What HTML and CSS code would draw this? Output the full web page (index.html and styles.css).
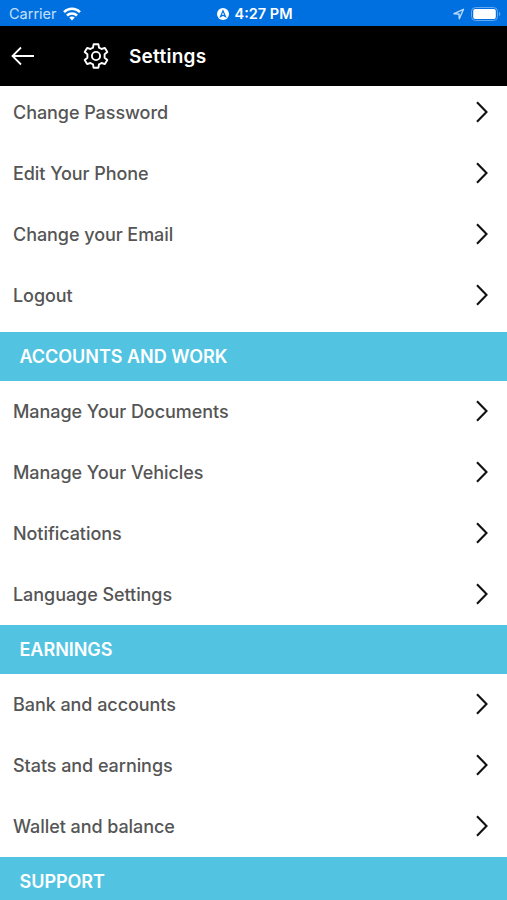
FILE: index.html
```html
<!DOCTYPE html>
<html lang="en">
<head>
  <meta charset="UTF-8" />
  <meta name="viewport" content="width=device-width, initial-scale=1.0"/>
  <title>Settings</title>
  <link rel="stylesheet" href="styles.css">
</head>
<body>

  <div class="status-bar">
    <div class="status-left">
      <span class="carrier">Carrier</span>
      <svg class="wifi" width="18" height="14" viewBox="0 0 18 14" fill="none" stroke="#fff" stroke-width="2.5">
        <path d="M1 5.2C5.5 0.7 12.5 0.7 17 5.2"/>
        <path d="M4 8.5C6.8 5.7 11.2 5.7 14 8.5"/>
        <path d="M9 13.4L6.2 10.5C7.8 9 10.2 9 11.8 10.5Z" fill="#fff" stroke="none"/>
      </svg>
    </div>
    <div class="status-center">
      <svg width="12" height="12" viewBox="0 0 12 12">
        <circle cx="6" cy="6" r="6" fill="#fff"/>
        <path d="M6 2.8L8.5 8.6L6 7.3L3.5 8.6Z" fill="none" stroke="#0070e0" stroke-width="1.2"/>
      </svg>
      <span class="time">4:27 PM</span>
    </div>
    <div class="status-right">
      <svg width="12" height="12" viewBox="0 0 12 12" fill="none" stroke="#b9dafc" stroke-width="1.4" stroke-linejoin="round">
        <path d="M1 5.7L10.5 1.3L6.3 10.8L6 6Z"/>
      </svg>
      <svg width="30" height="14" viewBox="0 0 30 14">
        <rect x="0.5" y="0.5" width="26" height="13" rx="4" fill="none" stroke="#65a9f2"/>
        <rect x="2.2" y="2" width="22.6" height="10" rx="2" fill="#fff"/>
        <path d="M28 4.8C29.8 5.5 29.8 8.5 28 9.2Z" fill="#65a9f2"/>
      </svg>
    </div>
  </div>

  <header class="header">
    <svg class="back" width="24" height="20" viewBox="0 0 24 20" fill="none" stroke="#fff" stroke-width="1.8">
      <path d="M10 1.5L1.5 10L10 18.5M1.5 10H23"/>
    </svg>
    <svg class="gear" width="26" height="26" viewBox="0 0 26 26" fill="none" stroke="#fff" stroke-width="1.9" stroke-linejoin="round">
      <path d="M10.6 1.2H15.4L16 4.6L18.6 6L21.9 4.9L24.3 9L21.6 11.3V14.7L24.3 17L21.9 21.1L18.6 20L16 21.4L15.4 24.8H10.6L10 21.4L7.4 20L4.1 21.1L1.7 17L4.4 14.7V11.3L1.7 9L4.1 4.9L7.4 6L10 4.6Z"/>
      <circle cx="13" cy="13" r="4.1"/>
    </svg>
    <h1 class="title">Settings</h1>
  </header>

  <ul class="list list-account">
    <li class="row">Change Password <svg class="chevron" viewBox="0 0 14 22"><path d="M2 1.2L11.5 11L2 20.8"/></svg></li>
    <li class="row">Edit Your Phone <svg class="chevron" viewBox="0 0 14 22"><path d="M2 1.2L11.5 11L2 20.8"/></svg></li>
    <li class="row">Change your Email <svg class="chevron" viewBox="0 0 14 22"><path d="M2 1.2L11.5 11L2 20.8"/></svg></li>
    <li class="row">Logout <svg class="chevron" viewBox="0 0 14 22"><path d="M2 1.2L11.5 11L2 20.8"/></svg></li>
  </ul>

  <h2 class="section">ACCOUNTS AND WORK</h2>
  <ul class="list">
    <li class="row">Manage Your Documents <svg class="chevron" viewBox="0 0 14 22"><path d="M2 1.2L11.5 11L2 20.8"/></svg></li>
    <li class="row">Manage Your Vehicles <svg class="chevron" viewBox="0 0 14 22"><path d="M2 1.2L11.5 11L2 20.8"/></svg></li>
    <li class="row">Notifications <svg class="chevron" viewBox="0 0 14 22"><path d="M2 1.2L11.5 11L2 20.8"/></svg></li>
    <li class="row">Language Settings <svg class="chevron" viewBox="0 0 14 22"><path d="M2 1.2L11.5 11L2 20.8"/></svg></li>
  </ul>

  <h2 class="section">EARNINGS</h2>
  <ul class="list">
    <li class="row">Bank and accounts <svg class="chevron" viewBox="0 0 14 22"><path d="M2 1.2L11.5 11L2 20.8"/></svg></li>
    <li class="row">Stats and earnings <svg class="chevron" viewBox="0 0 14 22"><path d="M2 1.2L11.5 11L2 20.8"/></svg></li>
    <li class="row">Wallet and balance <svg class="chevron" viewBox="0 0 14 22"><path d="M2 1.2L11.5 11L2 20.8"/></svg></li>
  </ul>

  <h2 class="section">SUPPORT</h2>

</body>
</html>
```
FILE: styles.css
```css
* {
  box-sizing: border-box;
}

body {
  margin: 0;
  height: 900px;
  overflow: hidden;
  background-color: #fff;
  font-family: Inter, "Liberation Sans", sans-serif;
}

.status-bar {
  display: grid;
  grid-template-columns: 1fr auto 1fr;
  align-items: center;
  height: 26px;
  padding: 1px 6px 0 9px;
  background-color: #0070e0;
  color: #fff;
  font-size: 14.5px;
}

.status-left,
.status-center,
.status-right {
  display: flex;
  align-items: center;
  gap: 6px;
}

.status-center {
  gap: 5px;
}

.carrier {
  color: #c5e0fb;
}

.time {
  font-weight: 600;
}

.status-right {
  justify-content: flex-end;
}

.header {
  display: flex;
  align-items: center;
  height: 60px;
  padding-left: 11px;
  background-color: #000;
  color: #fff;
}

.gear {
  margin-left: 48px;
}

.title {
  margin: 0 0 0 20px;
  font-size: 19px;
  font-weight: 600;
  letter-spacing: 0.25px;
}

.list {
  margin: 0;
  padding: 0;
  list-style: none;
}

/* first list is scrolled a little under the header */
.list-account {
  margin-top: -4.5px;
  padding-bottom: 6px;
}

.row {
  display: flex;
  align-items: center;
  justify-content: space-between;
  height: 61.1px;
  padding: 0 18px 0 13px;
  color: #555;
  font-size: 18px;
  font-weight: 500;
  letter-spacing: -0.06px;
}

.chevron {
  width: 14px;
  height: 22px;
  fill: none;
  stroke: #111;
  stroke-width: 2.1;
}

.section {
  display: flex;
  align-items: center;
  height: 48.7px;
  margin: 0;
  padding-left: 19.5px;
  background-color: #52c4e2;
  color: #fff;
  font-size: 18px;
  font-weight: 600;
  letter-spacing: -0.03px;
}
```
